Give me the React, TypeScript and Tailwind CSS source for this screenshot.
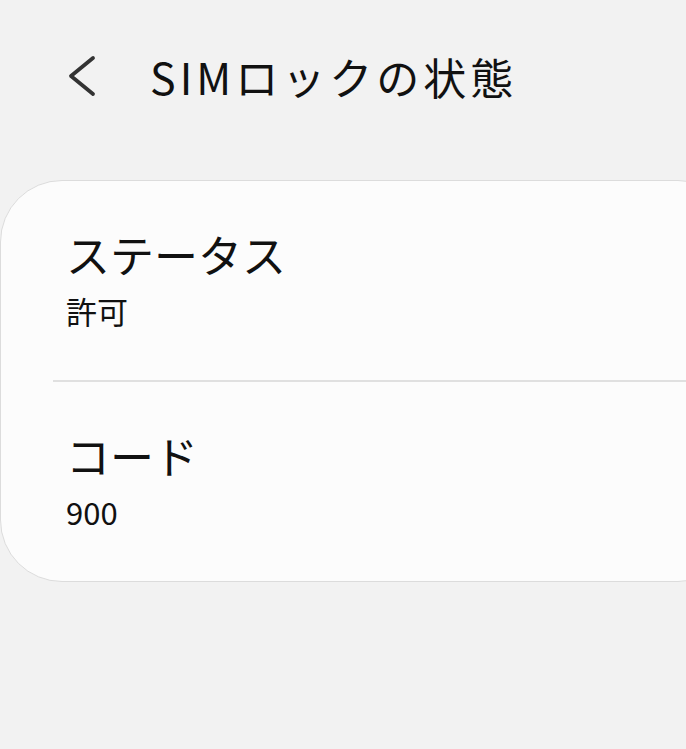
const font = { fontFamily: '"Noto Sans CJK JP", "Noto Sans", sans-serif' };

const rows = [
  { key: "status", label: "ステータス", value: "許可" },
  { key: "code", label: "コード", value: "900" },
];

export default function App() {
  return (
    <div className="h-[749px] w-[686px] overflow-hidden bg-[#f2f2f2] text-[#111]" style={font}>
      <header className="flex h-[155px] items-start pt-[48px]">
        <button className="ml-[66px] flex h-[56px] w-[40px] items-center">
          <svg width="30" height="42" viewBox="0 0 30 42" fill="none">
            <path d="M27 3L5 21l22 18" stroke="#333" strokeWidth="3.8" strokeLinecap="round" strokeLinejoin="round" />
          </svg>
        </button>
        <h1 className="ml-[44px] text-[43px] leading-[56px] tracking-[4px]">SIMロックの状態</h1>
      </header>

      <div className="mt-[25px] w-[740px] rounded-[62px] border border-[#dcdcdc] bg-[#fcfcfc]">
        {rows.map((row, i) => (
          <div key={row.key}>
            {i > 0 && <div className="ml-[52px] h-[2px] bg-[#e0e0e0]" />}
            <div className="flex h-[199px] flex-col justify-center pb-[6px] pl-[65px]">
              <div className="text-[44px] leading-[54px]">{row.label}</div>
              <div className="mt-[12px] text-[31px] leading-[36px]">{row.value}</div>
            </div>
          </div>
        ))}
      </div>
    </div>
  );
}
